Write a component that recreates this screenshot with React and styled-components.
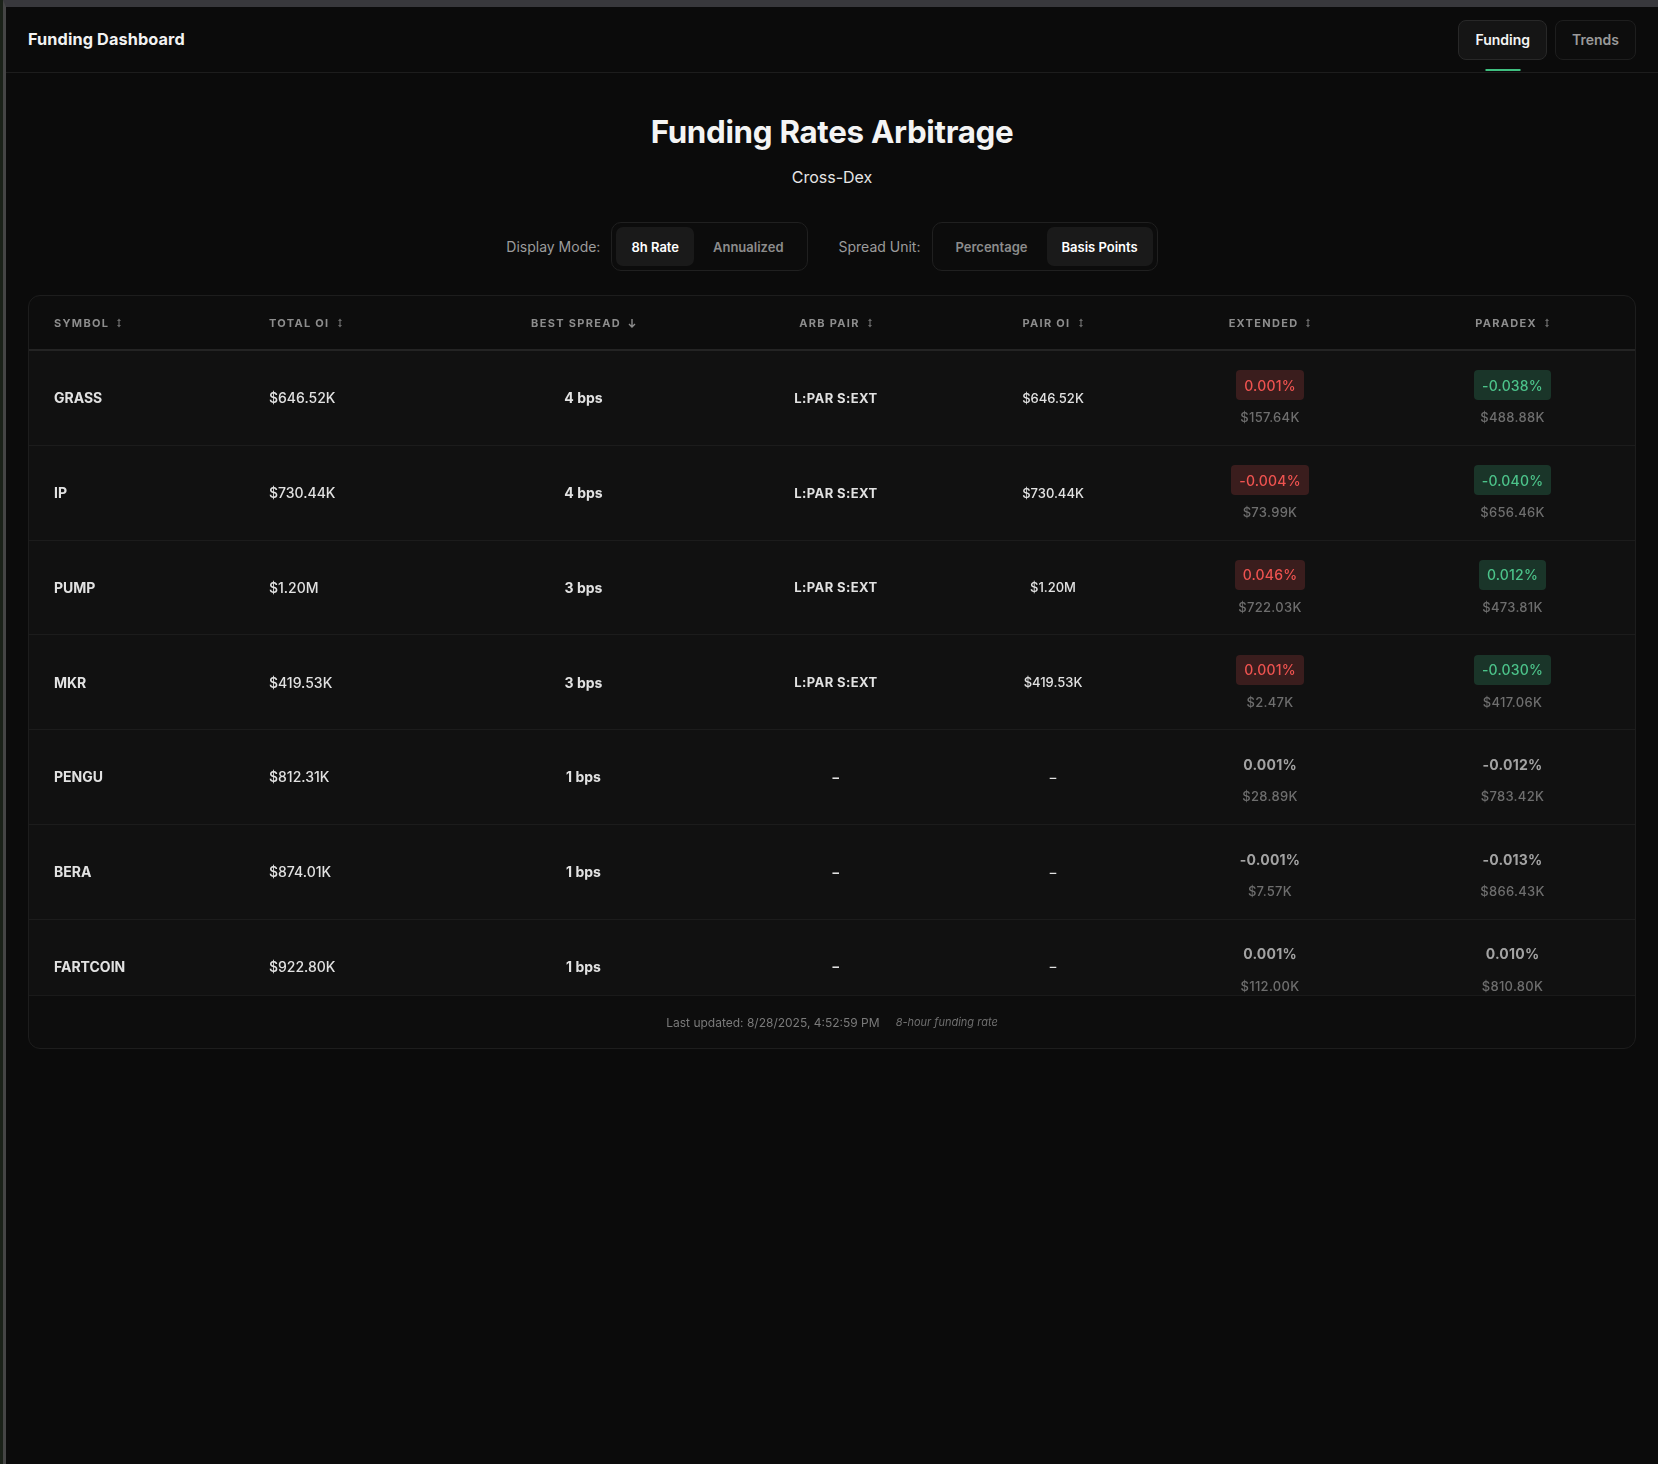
import React from "react";
import styled, { createGlobalStyle } from "styled-components";

const GlobalStyle = createGlobalStyle`
  html, body {
    margin: 0;
    padding: 0;
    background: #1b2219;
  }
  body {
    font-family: Inter, "Noto Sans", "Liberation Sans", sans-serif;
    color: #e6e6e6;
    -webkit-font-smoothing: antialiased;
  }
`;

const Frame = styled.div`
  margin-left: 3px;
  border-left: 3px solid #454545;
  border-top: 7px solid #38383c;
  background: #0b0b0b;
  min-height: 1457px;
`;

const TopBar = styled.header`
  height: 65px;
  display: flex;
  align-items: center;
  justify-content: space-between;
  padding: 0 22px;
  border-bottom: 1px solid #1d1d1d;
`;

const Brand = styled.div`
  font-size: 16.3px;
  font-weight: 700;
  color: #f2f2f2;
  letter-spacing: 0.1px;
  margin-top: -1px;
`;

const Nav = styled.nav`
  display: flex;
  gap: 8px;
  align-items: center;
`;

const NavButton = styled.button`
  position: relative;
  height: 40px;
  padding: 0 16px;
  border-radius: 8px;
  font-family: inherit;
  font-size: 14px;
  font-weight: 600;
  border: 1px solid ${(p) => (p.$active ? "#282828" : "#1e1e1e")};
  background: ${(p) => (p.$active ? "#151515" : "#0d0d0d")};
  color: ${(p) => (p.$active ? "#f5f5f5" : "#9a9a9a")};
  cursor: pointer;

  &::after {
    content: "";
    display: ${(p) => (p.$active ? "block" : "none")};
    position: absolute;
    left: 50%;
    bottom: -12px;
    width: 35px;
    height: 2px;
    transform: translateX(-50%);
    background: #3fbf80;
  }
`;

const Main = styled.main`
  padding: 37px 22px 0 22px;
  display: flex;
  flex-direction: column;
  align-items: center;
`;

const Title = styled.h1`
  margin: 0;
  font-size: 31.3px;
  font-weight: 700;
  letter-spacing: -0.3px;
  color: #f4f4f4;
  line-height: 44px;
`;

const Subtitle = styled.p`
  margin: 13px 0 0;
  font-size: 16px;
  color: #e6e6e6;
  line-height: 20px;
`;

const Controls = styled.div`
  margin-top: 35px;
  display: flex;
  align-items: center;
  gap: 31px;
`;

const ControlGroup = styled.div`
  display: flex;
  align-items: center;
  gap: 11px;
`;

const ControlLabel = styled.span`
  font-size: 14px;
  color: #9c9c9c;
`;

const Segmented = styled.div`
  display: flex;
  padding: 4px;
  border: 1px solid #202020;
  border-radius: 10px;
  background: #0c0c0c;
`;

const Segment = styled.button`
  height: 39px;
  padding: 0 ${(p) => p.$px || 15}px;
  border: none;
  border-radius: 7px;
  font-family: inherit;
  font-size: 13px;
  font-weight: 600;
  background: ${(p) => (p.$active ? "#1a1a1a" : "transparent")};
  color: ${(p) => (p.$active ? "#ffffff" : "#8c8c8c")};
  cursor: pointer;
`;

const Card = styled.section`
  align-self: stretch;
  margin-top: 24px;
  border: 1px solid #1d1d1d;
  border-radius: 12px;
  background: #0d0d0d;
  overflow: hidden;
`;

const COLS = "215px 207px 265px 240px 194px 240px 1fr";

const HeadRow = styled.div`
  display: grid;
  grid-template-columns: ${COLS};
  height: 53px;
  align-items: center;
  border-bottom: 2px solid #242424;
`;

const HeadCell = styled.div`
  display: flex;
  align-items: center;
  justify-content: ${(p) => (p.$left ? "flex-start" : "center")};
  gap: 7px;
  padding-left: ${(p) => (p.$left ? "25px" : "0")};
  font-size: 11px;
  font-weight: 700;
  letter-spacing: 1.3px;
  color: #8d8d8d;
`;

const Body = styled.div`
  height: 644px;
  overflow-y: auto;
  scrollbar-width: none;
  background: #111111;
`;

const Row = styled.div`
  display: grid;
  grid-template-columns: ${COLS};
  height: 93.75px;
  align-items: center;
  border-bottom: 1px solid #1c1c1c;
`;

const Cell = styled.div`
  display: flex;
  flex-direction: column;
  align-items: ${(p) => (p.$left ? "flex-start" : "center")};
  padding-left: ${(p) => (p.$left ? "25px" : "0")};
  font-size: ${(p) => p.$size || 14}px;
  font-weight: ${(p) => p.$weight || 500};
  letter-spacing: ${(p) => p.$track || 0}px;
  color: ${(p) => p.$color || "#e2e2e2"};
`;

const Rate = styled.span`
  display: inline-flex;
  align-items: center;
  height: 30px;
  padding: 0 8px;
  border-radius: 4px;
  font-size: 14px;
  letter-spacing: 0.2px;
  font-weight: ${(p) => (p.$tone ? 500 : 700)};
  color: ${(p) =>
    p.$tone === "red" ? "#ef5350" : p.$tone === "green" ? "#4cc38a" : "#a3a3a3"};
  background: ${(p) =>
    p.$tone === "red" ? "#3a1d1d" : p.$tone === "green" ? "#1a3529" : "transparent"};
`;

const Amount = styled.span`
  margin-top: 9px;
  font-size: 13px;
  letter-spacing: 0.3px;
  font-weight: 500;
  color: #6e6e6e;
`;

const Footer = styled.footer`
  height: 52px;
  display: flex;
  align-items: center;
  justify-content: center;
  gap: 16px;
  font-size: 12px;
  color: #7a7a7a;
  border-top: 1px solid #1a1a1a;
`;

const Note = styled.span`
  font-style: italic;
  font-size: 11px;
  color: #6f6f6f;
`;

const SortIcon = ({ down }) =>
  down ? (
    <svg width="8" height="10" viewBox="0 0 8 10" fill="none" stroke="#8d8d8d" strokeWidth="1.4">
      <path d="M4 1v8M1 6l3 3 3-3" />
    </svg>
  ) : (
    <svg width="6" height="10" viewBox="0 0 6 10" fill="#6a6a6a">
      <rect x="2.4" y="2" width="1.2" height="6" />
      <path d="M3 0.5 5 3H1z" />
      <path d="M3 9.5 5 7H1z" />
    </svg>
  );

const headers = [
  { label: "SYMBOL", left: true },
  { label: "TOTAL OI", left: true },
  { label: "BEST SPREAD", down: true },
  { label: "ARB PAIR" },
  { label: "PAIR OI" },
  { label: "EXTENDED" },
  { label: "PARADEX" },
];

const rows = [
  { sym: "GRASS", oi: "$646.52K", spread: "4 bps", pair: "L:PAR S:EXT", pairOi: "$646.52K", ext: ["0.001%", "red", "$157.64K"], par: ["-0.038%", "green", "$488.88K"] },
  { sym: "IP", oi: "$730.44K", spread: "4 bps", pair: "L:PAR S:EXT", pairOi: "$730.44K", ext: ["-0.004%", "red", "$73.99K"], par: ["-0.040%", "green", "$656.46K"] },
  { sym: "PUMP", oi: "$1.20M", spread: "3 bps", pair: "L:PAR S:EXT", pairOi: "$1.20M", ext: ["0.046%", "red", "$722.03K"], par: ["0.012%", "green", "$473.81K"] },
  { sym: "MKR", oi: "$419.53K", spread: "3 bps", pair: "L:PAR S:EXT", pairOi: "$419.53K", ext: ["0.001%", "red", "$2.47K"], par: ["-0.030%", "green", "$417.06K"] },
  { sym: "PENGU", oi: "$812.31K", spread: "1 bps", pair: "–", pairOi: "–", ext: ["0.001%", null, "$28.89K"], par: ["-0.012%", null, "$783.42K"] },
  { sym: "BERA", oi: "$874.01K", spread: "1 bps", pair: "–", pairOi: "–", ext: ["-0.001%", null, "$7.57K"], par: ["-0.013%", null, "$866.43K"] },
  { sym: "FARTCOIN", oi: "$922.80K", spread: "1 bps", pair: "–", pairOi: "–", ext: ["0.001%", null, "$112.00K"], par: ["0.010%", null, "$810.80K"] },
];

const Venue = ({ data }) => (
  <Cell>
    <Rate $tone={data[1]}>{data[0]}</Rate>
    <Amount>{data[2]}</Amount>
  </Cell>
);

export default function App() {
  return (
    <>
      <GlobalStyle />
      <Frame>
        <TopBar>
          <Brand>Funding Dashboard</Brand>
          <Nav>
            <NavButton $active>Funding</NavButton>
            <NavButton>Trends</NavButton>
          </Nav>
        </TopBar>
        <Main>
          <Title>Funding Rates Arbitrage</Title>
          <Subtitle>Cross-Dex</Subtitle>
          <Controls>
            <ControlGroup>
              <ControlLabel>Display Mode:</ControlLabel>
              <Segmented>
                <Segment $active>8h Rate</Segment>
                <Segment $px={19}>Annualized</Segment>
              </Segmented>
            </ControlGroup>
            <ControlGroup>
              <ControlLabel>Spread Unit:</ControlLabel>
              <Segmented>
                <Segment $px={19}>Percentage</Segment>
                <Segment $active>Basis Points</Segment>
              </Segmented>
            </ControlGroup>
          </Controls>
          <Card>
            <HeadRow>
              {headers.map((h) => (
                <HeadCell key={h.label} $left={h.left}>
                  {h.label}
                  <SortIcon down={h.down} />
                </HeadCell>
              ))}
            </HeadRow>
            <Body>
              {rows.map((r) => (
                <Row key={r.sym}>
                  <Cell $left $weight={700}>{r.sym}</Cell>
                  <Cell $left>{r.oi}</Cell>
                  <Cell $weight={700}>{r.spread}</Cell>
                  <Cell $weight={700} $size={13} $track={0.4}>{r.pair}</Cell>
                  <Cell $size={13}>{r.pairOi}</Cell>
                  <Venue data={r.ext} />
                  <Venue data={r.par} />
                </Row>
              ))}
            </Body>
            <Footer>
              <span>Last updated: 8/28/2025, 4:52:59 PM</span>
              <Note>8-hour funding rate</Note>
            </Footer>
          </Card>
        </Main>
      </Frame>
    </>
  );
}
